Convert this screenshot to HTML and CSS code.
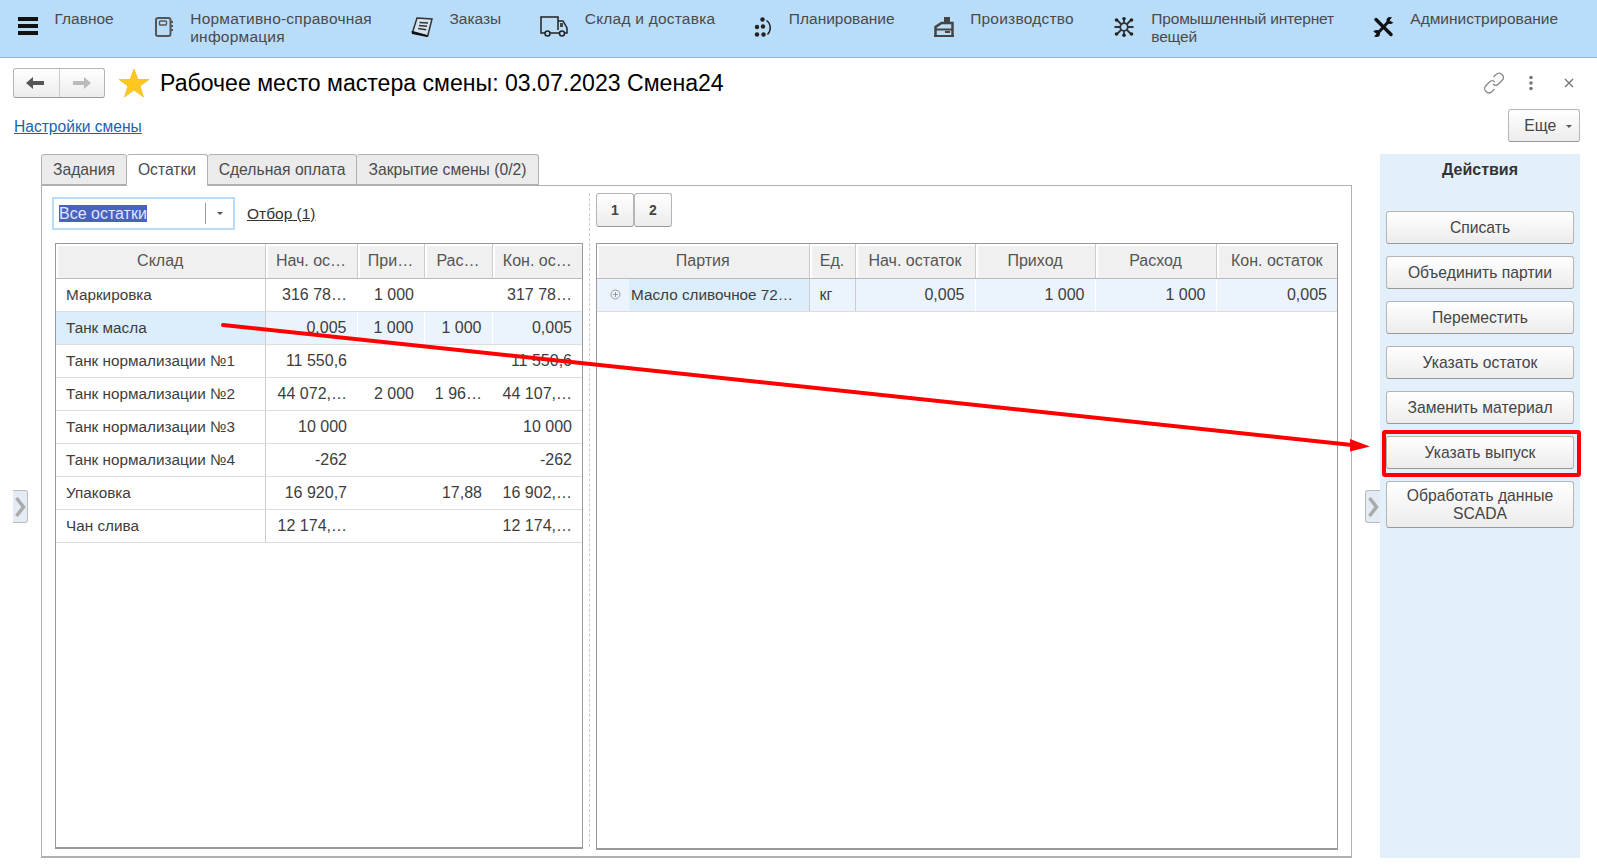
FILE: index.html
```html
<!DOCTYPE html>
<html lang="ru">
<head>
  <meta charset="UTF-8" />
  <title>Рабочее место мастера смены</title>
  <link rel="stylesheet" href="styles.css">
</head>
<body>
  <nav class="topnav">
    <div class="nav-item first">
      <svg class="ico w20" viewBox="0 0 20 20"><path d="M0 0h20v4H0zM0 7h20v4H0zM0 14h20v4H0z" fill="#111"/></svg>
      <span>Главное</span>
    </div>
    <div class="nav-item">
      <svg class="ico w19" viewBox="0 0 19 20"><rect x="1" y="1" width="14.500" height="18" rx="2" fill="none" stroke="#555" stroke-width="2"/><rect x="4.500" y="4" width="7" height="4" rx="1" fill="none" stroke="#555" stroke-width="1.400"/><path d="M17 4v2M17 8v2M17 12v2" stroke="#555" stroke-width="2"/></svg>
      <span class="wide">Нормативно-справочная<br>информация</span>
    </div>
    <div class="nav-item">
      <svg class="ico w22" viewBox="0 0 22 20"><path d="M6 1l15 1-4.300 17-15-4.300z" fill="#d5e3ee" stroke="#333" stroke-width="1.500"/><path d="M8.500 5.500l8.500.5M8 8.500l8 .8M7.200 11.500l8 1.200" stroke="#333" stroke-width="1.500"/><path d="M.5 14l16.500 4.500-1 1.500L1 17z" fill="#111"/></svg>
      <span>Заказы</span>
    </div>
    <div class="nav-item">
      <svg class="ico w28" viewBox="0 0 28 21"><path d="M1 14V1h17v13M18 5h5l4 7v5h-2M1 14v3h4M10 17h9" fill="none" stroke="#222" stroke-width="1.500"/><path d="M20 7h3v4h-3z" fill="#444"/><circle cx="7.500" cy="17.500" r="2.500" fill="none" stroke="#222" stroke-width="1.500"/><circle cx="22" cy="17.500" r="2.500" fill="none" stroke="#222" stroke-width="1.500"/></svg>
      <span class="wide">Склад и доставка</span>
    </div>
    <div class="nav-item">
      <svg class="ico w18" viewBox="0 0 18 20" fill="#222"><circle cx="8.500" cy="2.500" r="2.200"/><circle cx="3" cy="10" r="2.200"/><circle cx="9" cy="9.500" r="2.200"/><circle cx="3" cy="17.500" r="2.200"/><circle cx="9.500" cy="17.500" r="2.200"/><path d="M12.500 3.500c4.500 3 5 10 1 14" fill="none" stroke="#222" stroke-width="1.500"/></svg>
      <span>Планирование</span>
    </div>
    <div class="nav-item">
      <svg class="ico w20" viewBox="0 0 20 20"><path d="M10 0h6v6h-6z" fill="#444"/><path d="M1.500 19V10l6-4h11v13" fill="none" stroke="#444" stroke-width="2.500"/><path d="M0 18h20v2H0zM2 11.500h16v2H2z" fill="#444"/><path d="M11 14h5v2h-5z" fill="#444"/></svg>
      <span class="wide">Производство</span>
    </div>
    <div class="nav-item">
      <svg class="ico w22" viewBox="0 0 22 20"><circle cx="11" cy="10" r="3.800" fill="none" stroke="#333" stroke-width="1.800"/><path d="M11 1v5M11 14v5M1.500 10H7M15 10h5.500M4 3l4.500 4.500M18 3l-4.500 4.500M4 17l4.500-4.500M18 17l-4.500-4.500" stroke="#333" stroke-width="1.800"/><g fill="#222"><circle cx="11" cy="1.800" r="1.800"/><circle cx="3.500" cy="3" r="1.800"/><circle cx="18.500" cy="3" r="1.800"/><circle cx="3.500" cy="17" r="1.800"/><circle cx="18.500" cy="17" r="1.800"/><circle cx="11" cy="18.200" r="1.800"/></g></svg>
      <span class="tight">Промышленный интернет<br>вещей</span>
    </div>
    <div class="nav-item">
      <svg class="ico w21" viewBox="0 0 21 20"><path d="M3 2.500l15 15" stroke="#111" stroke-width="3.500" stroke-linecap="round"/><path d="M17 3L4 17" stroke="#111" stroke-width="3"/><circle cx="17" cy="3.500" r="3.500" fill="#111"/><circle cx="3.500" cy="16.500" r="3.500" fill="#111"/><path d="M16.500 3.500L19.500-.5l3 3-2.500 3zM3.500 16.500L.5 20.500l-3-3 2.500-3z" fill="#b9dcf9"/></svg>
      <span>Администрирование</span>
    </div>
  </nav>

  <header class="title-row">
    <div class="nav-btns">
      <button class="nav-btn">
        <svg width="20" height="14" viewBox="0 0 20 14"><path d="M0 7l7-6v4h11v4H7v4z" fill="#555"/></svg>
      </button>
      <button class="nav-btn">
        <svg width="20" height="14" viewBox="0 0 20 14"><path d="M19 7l-7-6v4H1v4h11v4z" fill="#bbb"/></svg>
      </button>
    </div>
    <svg class="star" width="30" height="28" viewBox="0 0 30 28"><path d="M15 0l4 10.500h11l-9 6.500 3.500 11L15 21l-9.500 7L9 17 0 10.500h11z" fill="#fec81e" stroke="#e8b100" stroke-width=".6"/></svg>
    <h1>Рабочее место мастера смены: 03.07.2023 Смена24</h1>
    <div class="win-icons">
      <svg width="22" height="22" viewBox="0 0 22 22" fill="none" stroke="#888" stroke-width="1.300"><path d="M10.500 5l2.500-2.500c2-2 4.500-1.500 6 0s2 4 0 6l-3.500 3.500c-2 2-4 1.500-5.500 0"/><path d="M11.500 17L9 19.500c-2 2-4.500 1.500-6 0s-2-4 0-6L6.500 10c2-2 4-1.500 5.500 0"/></svg>
      <svg width="6" height="16" viewBox="0 0 6 16" fill="#777"><circle cx="3" cy="2.500" r="1.800"/><circle cx="3" cy="8" r="1.800"/><circle cx="3" cy="13.500" r="1.800"/></svg>
      <svg class="close-ico" width="10" height="10" viewBox="0 0 10 10" stroke="#777" stroke-width="1.400"><path d="M1 1l8 8M9 1l-8 8"/></svg>
    </div>
  </header>

  <div class="link-row">
    <a class="settings-link" href="#">Настройки смены</a>
    <button class="btn more-btn">Еще <i class="caret"></i></button>
  </div>

  <main class="work">
    <div class="fold fold-left"><svg width="12" height="22" viewBox="0 0 12 22"><path d="M2.500 2l7 9-7 9" fill="none" stroke="#aaa" stroke-width="3.500"/></svg></div>

    <section class="tabs-col">
      <div class="tabs">
        <div class="tab tab1">Задания</div>
        <div class="tab tab2 active">Остатки</div>
        <div class="tab tab3">Сдельная оплата</div>
        <div class="tab tab4">Закрытие смены (0/2)</div>
      </div>
      <div class="panel">
        <div class="pane-left">
          <div class="filter-row">
            <div class="combo">
              <span class="combo-text"><span class="selected">Все остатки</span></span>
              <span class="combo-btn"><i class="caret"></i></span>
            </div>
            <a class="filter-link" href="#">Отбор (1)</a>
          </div>
          <div class="grid-box left-box">
            <table class="grid">
              <colgroup><col class="c1"><col class="c2"><col class="c3"><col class="c4"><col class="c5"></colgroup>
              <thead><tr><th>Склад</th><th>Нач. ос…</th><th>При…</th><th>Рас…</th><th>Кон. ос…</th></tr></thead>
              <tbody>
                <tr><td>Маркировка</td><td class="num">316 78…</td><td class="num">1 000</td><td class="num"></td><td class="num">317 78…</td></tr>
                <tr class="cur"><td class="hl">Танк масла</td><td class="num">0,005</td><td class="num">1 000</td><td class="num">1 000</td><td class="num">0,005</td></tr>
                <tr><td>Танк нормализации №1</td><td class="num">11 550,6</td><td class="num"></td><td class="num"></td><td class="num">11 550,6</td></tr>
                <tr><td>Танк нормализации №2</td><td class="num">44 072,…</td><td class="num">2 000</td><td class="num">1 96…</td><td class="num">44 107,…</td></tr>
                <tr><td>Танк нормализации №3</td><td class="num">10 000</td><td class="num"></td><td class="num"></td><td class="num">10 000</td></tr>
                <tr><td>Танк нормализации №4</td><td class="num">-262</td><td class="num"></td><td class="num"></td><td class="num">-262</td></tr>
                <tr><td>Упаковка</td><td class="num">16 920,7</td><td class="num"></td><td class="num">17,88</td><td class="num">16 902,…</td></tr>
                <tr><td>Чан слива</td><td class="num">12 174,…</td><td class="num"></td><td class="num"></td><td class="num">12 174,…</td></tr>
              </tbody>
            </table>
          </div>
        </div>
        <div class="splitter"></div>
        <div class="pane-right">
          <div class="page-btns">
            <button class="btn page-btn">1</button>
            <button class="btn page-btn">2</button>
          </div>
          <div class="grid-box right-box">
            <table class="grid">
              <colgroup><col class="r1"><col class="r2"><col class="r3"><col class="r4"><col class="r5"><col class="r6"></colgroup>
              <thead><tr><th>Партия</th><th>Ед.</th><th>Нач. остаток</th><th>Приход</th><th>Расход</th><th>Кон. остаток</th></tr></thead>
              <tbody>
                <tr class="cur">
                  <td class="tree-cell"><span class="tree-row"><svg class="plus" width="11" height="11" viewBox="0 0 11 11" fill="none" stroke="#999"><circle cx="5.500" cy="5.500" r="4.500"/><path d="M3 5.500h5M5.500 3v5"/></svg><span class="tree-text">Масло сливочное 72…</span></span></td>
                  <td>кг</td><td class="num">0,005</td><td class="num">1 000</td><td class="num">1 000</td><td class="num">0,005</td>
                </tr>
              </tbody>
            </table>
          </div>
        </div>
      </div>
    </section>

    <div class="fold fold-right"><svg width="12" height="22" viewBox="0 0 12 22"><path d="M2.500 2l7 9-7 9" fill="none" stroke="#aaa" stroke-width="3.500"/></svg></div>

    <aside class="actions">
      <div class="actions-title">Действия</div>
      <button class="btn act-btn">Списать</button>
      <button class="btn act-btn">Объединить партии</button>
      <button class="btn act-btn">Переместить</button>
      <button class="btn act-btn">Указать остаток</button>
      <button class="btn act-btn">Заменить материал</button>
      <button class="btn act-btn">Указать выпуск</button>
      <button class="btn act-btn tall">Обработать данные<br>SCADA</button>
    </aside>
  </main>

  <svg class="callout" width="1597" height="865" viewBox="0 0 1597 865">
    <path d="M223 325L1352 445" stroke="#f00" stroke-width="4" stroke-linecap="round"/>
    <path d="M1350 439l20 7.500-20 5z" fill="#f00"/>
    <rect x="1384" y="432" width="195" height="43" rx="1" fill="none" stroke="#f00" stroke-width="4"/>
  </svg>
</body>
</html>
```

FILE: styles.css
```css
* {
  box-sizing: border-box;
}
html, body {
  margin: 0;
  height: 865px;
  overflow: hidden;
}
body {
  font-family: "Liberation Sans", Arial, sans-serif;
  font-size: 16px;
  color: #333;
  background: #fff;
  position: relative;
}
button {
  font-family: inherit;
  font-size: 15.7px;
  color: #444;
}

/* top menu */
.topnav {
  display: flex;
  gap: 39px;
  height: 58px;
  padding: 10px 0 0 18px;
  background: #b9dcf9;
  border-bottom: 1px solid #9db4c8;
  font-size: 15.5px;
  line-height: 17.5px;
  color: #4a4a4a;
  white-space: nowrap;
}
.nav-item {
  display: flex;
  gap: 16.5px;
  align-items: flex-start;
}
.nav-item.first {
  margin-right: 2px;
}
.wide { letter-spacing: .22px; }
.tight { letter-spacing: -.2px; }
.ico {
  margin-top: 7px;
  height: 20px;
  flex: none;
  overflow: visible;
}
.w18 { width: 18px; }
.w19 { width: 19px; }
.w20 { width: 20px; }
.w21 { width: 21px; }
.w22 { width: 22px; }
.w28 { width: 28px; height: 21px; margin-top: 6px; }

/* title */
.title-row {
  display: flex;
  align-items: center;
  height: 51px;
  padding: 10px 17px 11px 13px;
}
.nav-btns {
  display: flex;
  width: 92px;
  height: 30px;
  border: 1px solid #b5b5b5;
  border-bottom-color: #999;
  border-radius: 3px;
  background: linear-gradient(#fff, #ececec);
}
.nav-btn {
  flex: 1;
  padding: 0;
  border: 0;
  background: none;
  display: flex;
  align-items: center;
  justify-content: center;
}
.nav-btn + .nav-btn {
  border-left: 1px solid #ccc;
}
.star {
  margin-left: 14px;
  flex: none;
}
h1 {
  margin: 0 0 0 11px;
  font-size: 23.1px;
  font-weight: normal;
  color: #000;
}
.win-icons {
  margin-left: auto;
  display: flex;
  align-items: center;
  gap: 23px;
  padding-right: 6px;
}
.close-ico {
  margin-left: 7px;
}

/* link row */
.link-row {
  display: flex;
  justify-content: space-between;
  height: 45px;
  padding: 0 17px 0 14px;
}
.settings-link {
  margin-top: 9px;
  font-size: 15.6px;
  color: #1c62ac;
}
.btn {
  border: 1px solid #b5b5b5;
  border-bottom-color: #999;
  border-radius: 3px;
  background: linear-gradient(#fff, #ececec);
  padding: 0;
}
.more-btn {
  width: 72px;
  height: 33px;
  padding-left: 8px;
}
.caret {
  display: inline-block;
  width: 0;
  height: 0;
  margin-left: 5px;
  vertical-align: middle;
  border: 3px solid transparent;
  border-top: 3px solid #555;
  border-bottom: 0;
}

/* work area */
.work {
  display: flex;
  height: 704px;
  padding-left: 13px;
}
.fold {
  flex: none;
  width: 15px;
  height: 33px;
  margin-top: 336px;
  display: flex;
  align-items: center;
  justify-content: center;
  border: 1px solid #bbb;
  background: #e3ecf5;
}
.fold-left {
  border-left: 0;
  border-radius: 0 3px 3px 0;
}
.fold-right {
  margin-left: 13px;
  border-right: 0;
  border-radius: 3px 0 0 3px;
}
.tabs-col {
  flex: none;
  width: 1311px;
  margin-left: 13px;
  display: flex;
  flex-direction: column;
}
.tabs {
  display: flex;
  height: 31px;
  font-size: 15.7px;
  line-height: 29px;
  color: #4a4a4a;
}
.tab {
  height: 31px;
  text-align: center;
  background: #ebebeb;
  border: 1px solid #b0b0b0;
  border-left: 0;
  border-radius: 3px 3px 0 0;
}
.tab1 { width: 86px; border-left: 1px solid #b0b0b0; }
.tab2 { width: 81px; }
.tab3 { width: 149px; }
.tab4 { width: 182px; }
.tab.active {
  height: 32px;
  background: #fff;
  border-bottom: 0;
  position: relative;
  z-index: 1;
}
.panel {
  flex: 1;
  display: flex;
  border: 1px solid #b0b0b0;
  border-bottom-width: 2px;
}
.pane-left {
  width: 547px;
  padding: 11px 0 0 10px;
  display: flex;
  flex-direction: column;
}
.filter-row {
  display: flex;
  align-items: center;
  height: 33px;
  margin-bottom: 13px;
}
.combo {
  display: flex;
  align-items: center;
  width: 183px;
  height: 33px;
  border: 2px solid #b9dcf9;
  padding: 4px 0 4px 5px;
}
.combo-text {
  flex: none;
  width: 146px;
}
.selected {
  background: #4a62bf;
  color: #dfe6ff;
}
.combo-btn {
  flex: 1;
  height: 100%;
  border-left: 1px solid #999;
  display: flex;
  align-items: center;
  justify-content: center;
}
.combo-btn .caret {
  margin: 0;
}
.filter-link {
  margin-left: 12px;
  font-size: 15.5px;
  color: #333;
}
.splitter {
  width: 1px;
  margin-top: 7px;
  margin-bottom: 9px;
  border-left: 1px dashed #ccc;
}
.pane-right {
  flex: 1;
  padding: 7px 0 0 6px;
  display: flex;
  flex-direction: column;
}
.page-btns {
  display: flex;
  height: 34px;
  margin-bottom: 16px;
}
.page-btn {
  width: 38px;
  font-size: 14px;
  font-weight: bold;
}
.grid-box {
  border: 1px solid #999;
  border-bottom-width: 2px;
}
.left-box {
  width: 528px;
  height: 606px;
  margin-left: 3px;
}
.right-box {
  width: 742px;
  height: 607px;
}
.grid {
  width: 100%;
  table-layout: fixed;
  border-collapse: collapse;
  color: #3d3d3d;
}
.c1 { width: 209px; }
.c2 { width: 92px; }
.c3 { width: 67px; }
.c4 { width: 68px; }
.r1 { width: 212px; }
.r2 { width: 46px; }
.r3 { width: 120px; }
.r4 { width: 120px; }
.r5 { width: 121px; }
.grid th {
  height: 34px;
  padding: 0 4px;
  font-weight: normal;
  color: #555;
  background: #f0f0f0;
  border-bottom: 1px solid #bbb;
  border-left: 1px solid #ccc;
  box-shadow: inset 2px 2px 0 #fff;
  white-space: nowrap;
}
.grid th:first-child {
  border-left: 0;
}
.grid td {
  height: 33px;
  padding: 0 10px;
  border-bottom: 1px solid #ddd;
  white-space: nowrap;
  overflow: hidden;
}
.grid td:first-child {
  font-size: 15.3px;
  border-right: 1px solid #ccc;
}
.right-box td:nth-child(2) {
  border-right: 1px solid #ccc;
}
.grid td.num {
  text-align: right;
}
.grid .cur td {
  background: #ebf4fc;
  border-left: 1px solid #fff;
}
.grid .cur td:first-child {
  border-left: 0;
}
.grid .cur td.hl {
  background: #dcedfb;
}
.grid .cur td.tree-cell {
  padding: 0;
}
.tree-row {
  display: flex;
  align-items: center;
  height: 32px;
}
.plus {
  margin: 0 8px 0 13px;
  flex: none;
}
.tree-text {
  flex: 1;
  height: 100%;
  line-height: 32px;
  padding-left: 2px;
  background: #dcedfb;
}

/* actions */
.actions {
  flex: none;
  width: 200px;
  padding: 0 6px;
  background: #e3f0fc;
  display: flex;
  flex-direction: column;
  gap: 12px;
}
.actions-title {
  height: 45px;
  padding-top: 7px;
  text-align: center;
  font-weight: bold;
}
.act-btn {
  flex: none;
  width: 188px;
  height: 33px;
}
.act-btn.tall {
  height: 47px;
  line-height: 18px;
}

/* red arrow over the page */
.callout {
  position: absolute;
  left: 0;
  top: 0;
  pointer-events: none;
}
```
